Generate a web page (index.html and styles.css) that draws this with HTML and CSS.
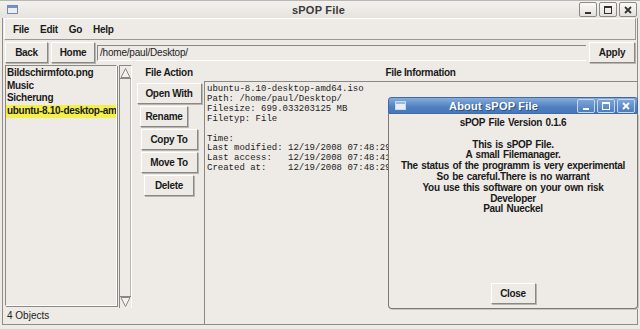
FILE: index.html
```html
<!DOCTYPE html>
<html>
<head>
<meta charset="utf-8">
<link rel="stylesheet" href="styles.css">
</head>
<body>
<div class="window">
  <div class="titlebar">
    <svg class="wicon" width="11" height="9" viewBox="0 0 11 9"><rect x="0.5" y="0.5" width="10" height="8" fill="#e8eef7" stroke="#7a8aa6"/><rect x="1" y="1" width="9" height="2" fill="#6f93c8"/></svg>
    <div class="ttl">sPOP File</div>
    <div class="tbtns">
      <span class="tbtn"><svg width="16" height="12" viewBox="0 0 16 12"><rect x="5" y="8" width="6" height="2" fill="#333"/></svg></span>
      <span class="tbtn"><svg width="16" height="12" viewBox="0 0 16 12"><rect x="4.5" y="2.5" width="7" height="7" fill="none" stroke="#333"/><rect x="4.5" y="2.5" width="7" height="1.5" fill="#333"/></svg></span>
      <span class="tbtn"><svg width="16" height="12" viewBox="0 0 16 12"><path d="M5 3 L11 9 M11 3 L5 9" stroke="#333" stroke-width="1.8"/></svg></span>
    </div>
  </div>
  <div class="body">
    <div class="menubar">
      <span class="mi">File</span>
      <span class="mi">Edit</span>
      <span class="mi">Go</span>
      <span class="mi">Help</span>
    </div>
    <div class="toolbar">
      <button class="btn tb-back">Back</button>
      <button class="btn tb-home">Home</button>
      <div class="path">/home/paul/Desktop/</div>
      <button class="btn tb-apply">Apply</button>
    </div>
    <div class="main">
      <div class="left">
        <div class="listrow">
          <div class="list">
            <div class="li">Bildschirmfoto.png</div>
            <div class="li">Music</div>
            <div class="li">Sicherung</div>
            <div class="li sel">ubuntu-8.10-desktop-amd64.iso</div>
          </div>
          <div class="scroll">
            <svg class="arr" width="11" height="12" viewBox="0 0 11 12"><path d="M5.5 1.5 L10 10.5 L1 10.5 Z" fill="#f4f2ee" stroke="#8a8884"/><line x1="0" y1="11.5" x2="11" y2="11.5" stroke="#8a8884"/></svg>
            <div class="sfill"></div>
            <svg class="arr" width="11" height="12" viewBox="0 0 11 12"><line x1="0" y1="0.5" x2="11" y2="0.5" stroke="#8a8884"/><path d="M5.5 10.5 L10 1.5 L1 1.5 Z" fill="#f4f2ee" stroke="#8a8884"/></svg>
          </div>
        </div>
        <div class="status">4 Objects</div>
      </div>
      <div class="actions">
        <div class="lbl">File Action</div>
        <button class="btn ab ab-open">Open With</button>
        <button class="btn ab ab-ren">Rename</button>
        <button class="btn ab ab-copy">Copy To</button>
        <button class="btn ab ab-move">Move To</button>
        <button class="btn ab ab-del">Delete</button>
      </div>
      <div class="info">
        <div class="lbl center">File Information</div>
        <pre class="text">ubuntu-8.10-desktop-amd64.iso
Path: /home/paul/Desktop/
Filesize: 699.033203125 MB
Filetyp: File

Time:
Last modified: 12/19/2008 07:48:29
Last access:   12/19/2008 07:48:41
Created at:    12/19/2008 07:48:29</pre>
      </div>
    </div>
  </div>

  <div class="dialog">
    <div class="dtitle">
      <svg class="wicon" width="11" height="9" viewBox="0 0 11 9"><rect x="0.5" y="0.5" width="10" height="8" fill="#e8eef7" stroke="#c9d8ee"/><rect x="1" y="1" width="9" height="2" fill="#9db8e0"/></svg>
      <div class="dttl">About sPOP File</div>
      <div class="tbtns">
        <span class="dbtn"><svg width="16" height="12" viewBox="0 0 16 12"><rect x="5" y="8" width="6" height="2" fill="#fff"/></svg></span>
        <span class="dbtn"><svg width="16" height="12" viewBox="0 0 16 12"><rect x="4.5" y="2.5" width="7" height="7" fill="none" stroke="#fff"/><rect x="4.5" y="2.5" width="7" height="1.5" fill="#fff"/></svg></span>
        <span class="dbtn"><svg width="16" height="12" viewBox="0 0 16 12"><path d="M5 3 L11 9 M11 3 L5 9" stroke="#fff" stroke-width="1.8"/></svg></span>
      </div>
    </div>
    <div class="dbody">
      <div class="dtext">
        <div>sPOP File Version 0.1.6</div>
        <div>&nbsp;</div>
        <div>This is sPOP File.</div>
        <div>A small Filemanager.</div>
        <div>The status of the programm is very experimental</div>
        <div>So be careful.There is no warrant</div>
        <div>You use this software on your own risk</div>
        <div>Developer</div>
        <div>Paul Nueckel</div>
      </div>
      <button class="btn closeb">Close</button>
    </div>
  </div>
</div>
</body>
</html>
```

FILE: styles.css
```css
* { box-sizing: border-box; }
html, body { margin: 0; padding: 0; }
body { width: 640px; height: 329px; overflow: hidden; background: #eeebe7; }

.window {
  position: relative;
  width: 640px;
  height: 329px;
  background: #eeebe7;
  font-family: "Liberation Sans", Arial, sans-serif;
  font-weight: bold;
  font-size: 10px;
  letter-spacing: -0.3px;
  color: #1a1a1a;
  display: flex;
  flex-direction: column;
  border-top: 1px solid #b9b7b3;
}

.titlebar {
  height: 19px;
  display: flex;
  align-items: center;
  padding: 0 3px 0 7px;
  background: linear-gradient(#f3f1ee, #e6e3de);
}
.wicon { flex: none; }
.ttl {
  flex: 1;
  text-align: center;
  font-size: 11px;
  color: #3a3a3a;
  padding-left: 40px;
  letter-spacing: 0.2px;
}
.tbtns { display: flex; gap: 2px; }
.tbtn {
  width: 18px; height: 15px;
  border: 1px solid #8d8b87;
  border-radius: 2px;
  background: linear-gradient(#fbfaf8, #e4e1dc);
  display: flex; align-items: center; justify-content: center;
}

.body {
  flex: 1;
  margin: 0 2px 4px 2px;
  border-left: 1px solid #8f8d89;
  border-right: 1px solid #8f8d89;
  border-bottom: 1px solid #8f8d89;
  display: flex;
  flex-direction: column;
}

.menubar {
  height: 22px;
  margin: 0 1px;
  display: flex;
  align-items: center;
  padding-left: 8px;
  padding-top: 1px;
  border-top: 1px solid #fff;
  border-left: 1px solid #fff;
  border-bottom: 1px solid #9a9893;
  border-right: 1px solid #9a9893;
}
.mi { margin-right: 11px; }

.toolbar {
  height: 25px;
  display: flex;
  align-items: center;
  padding: 0 2px 0 2px;
  gap: 2px;
}

.btn {
  font-family: inherit;
  font-weight: bold;
  font-size: 10px;
  letter-spacing: -0.3px;
  color: #1a1a1a;
  background: #eeebe7;
  border-top: 1px solid #ffffff;
  border-left: 1px solid #ffffff;
  border-right: 1px solid #8a8884;
  border-bottom: 1px solid #8a8884;
  box-shadow: 1px 1px 0 #b8b5b0;
  padding: 0;
  height: 21px;
  margin: 0;
}
.tb-back { width: 43px; }
.tb-home { width: 44px; margin-left: 1px; }
.path {
  flex: 1;
  height: 16px;
  line-height: 14px;
  padding-left: 2px;
  border-top: 1px solid #8a8884;
  border-left: 1px solid #8a8884;
  border-bottom: 1px solid #fff;
  font-weight: normal;
  letter-spacing: -0.2px;
  color: #222;
}
.tb-apply { width: 46px; margin-left: 1px; }

.main {
  flex: 1;
  display: flex;
  min-height: 0;
}

.left {
  width: 131px;
  display: flex;
  flex-direction: column;
  padding-left: 2px;
}
.listrow {
  display: flex;
  height: 243px;
}
.list {
  width: 112px;
  height: 241px;
  border-top: 1px solid #8a8884;
  border-left: 1px solid #8a8884;
  border-bottom: 1px solid #fff;
  border-right: 1px solid #fff;
  box-shadow: 1px 1px 0 #8a8884;
  padding-top: 1px;
  overflow: hidden;
}
.li {
  height: 12.7px;
  line-height: 12.7px;
  white-space: nowrap;
  overflow: hidden;
  padding-left: 1px;
}
.li.sel { background: #f3f04a; }

.scroll {
  width: 13px;
  margin-left: 2px;
  border-left: 1px solid #8a8884;
  border-top: 1px solid #8a8884;
  border-right: 1px solid #fff;
  display: flex;
  flex-direction: column;
  padding: 1px 0 0 0;
}
.scroll .arr { display: block; }
.sfill { flex: 1; border-right: 1px solid #b9b6b1; }

.status {
  height: 16px;
  line-height: 16px;
  font-weight: normal;
  padding-left: 2px;
  letter-spacing: 0;
  color: #222;
}

.actions {
  width: 70px;
  display: flex;
  flex-direction: column;
  align-items: center;
  gap: 2px;
}
.lbl {
  height: 14px;
  line-height: 14px;
  margin-top: 1px;
  margin-bottom: 1px;
}
.center { text-align: center; }
.ab-open { width: 65px; }
.ab-ren { width: 48px; margin-right: 10px; }
.ab-copy { width: 57px; }
.ab-move { width: 57px; }
.ab-del { width: 50px; }

.info {
  flex: 1;
  display: flex;
  flex-direction: column;
}
.text {
  flex: 1;
  margin: 0;
  border-top: 1px solid #8a8884;
  border-left: 1px solid #8a8884;
  padding: 3px 2px;
  font-family: "Liberation Mono", "Courier New", monospace;
  font-weight: normal;
  font-size: 9px;
  line-height: 9.9px;
  letter-spacing: 0;
  color: #222;
}

.dialog {
  position: absolute;
  left: 388px;
  top: 96px;
  width: 250px;
  height: 212px;
  display: flex;
  flex-direction: column;
}
.dtitle {
  height: 17px;
  border-radius: 3px 3px 0 0;
  background: linear-gradient(#86acdc, #4f80c0 60%, #4677b8);
  border: 1px solid #3e6aa6;
  display: flex;
  align-items: center;
  padding: 0 2px 0 6px;
}
.dttl {
  flex: 1;
  text-align: center;
  color: #fff;
  font-size: 11px;
  letter-spacing: 0.2px;
  text-shadow: 1px 1px 0 #2d4f7e;
  padding-left: 4px;
}
.dbtn {
  width: 18px; height: 14px;
  border: 1px solid #c7d7ee;
  border-radius: 2px;
  background: linear-gradient(#7da4d8, #4d7ebe);
  display: flex; align-items: center; justify-content: center;
}
.dbody {
  flex: 1;
  border-left: 1px solid #7b7975;
  border-right: 1px solid #7b7975;
  border-bottom: 1px solid #7b7975;
  border-radius: 0 0 4px 4px;
  box-shadow: 1px 1px 0 #c9c6c1;
  background: #eeebe7;
  display: flex;
  flex-direction: column;
  align-items: center;
  padding-top: 4px;
  padding-bottom: 4px;
}
.dtext {
  text-align: center;
  line-height: 10.8px;
  word-spacing: 1px;
}
.closeb {
  margin-top: auto;
  width: 45px;
  height: 21px;
}
```
